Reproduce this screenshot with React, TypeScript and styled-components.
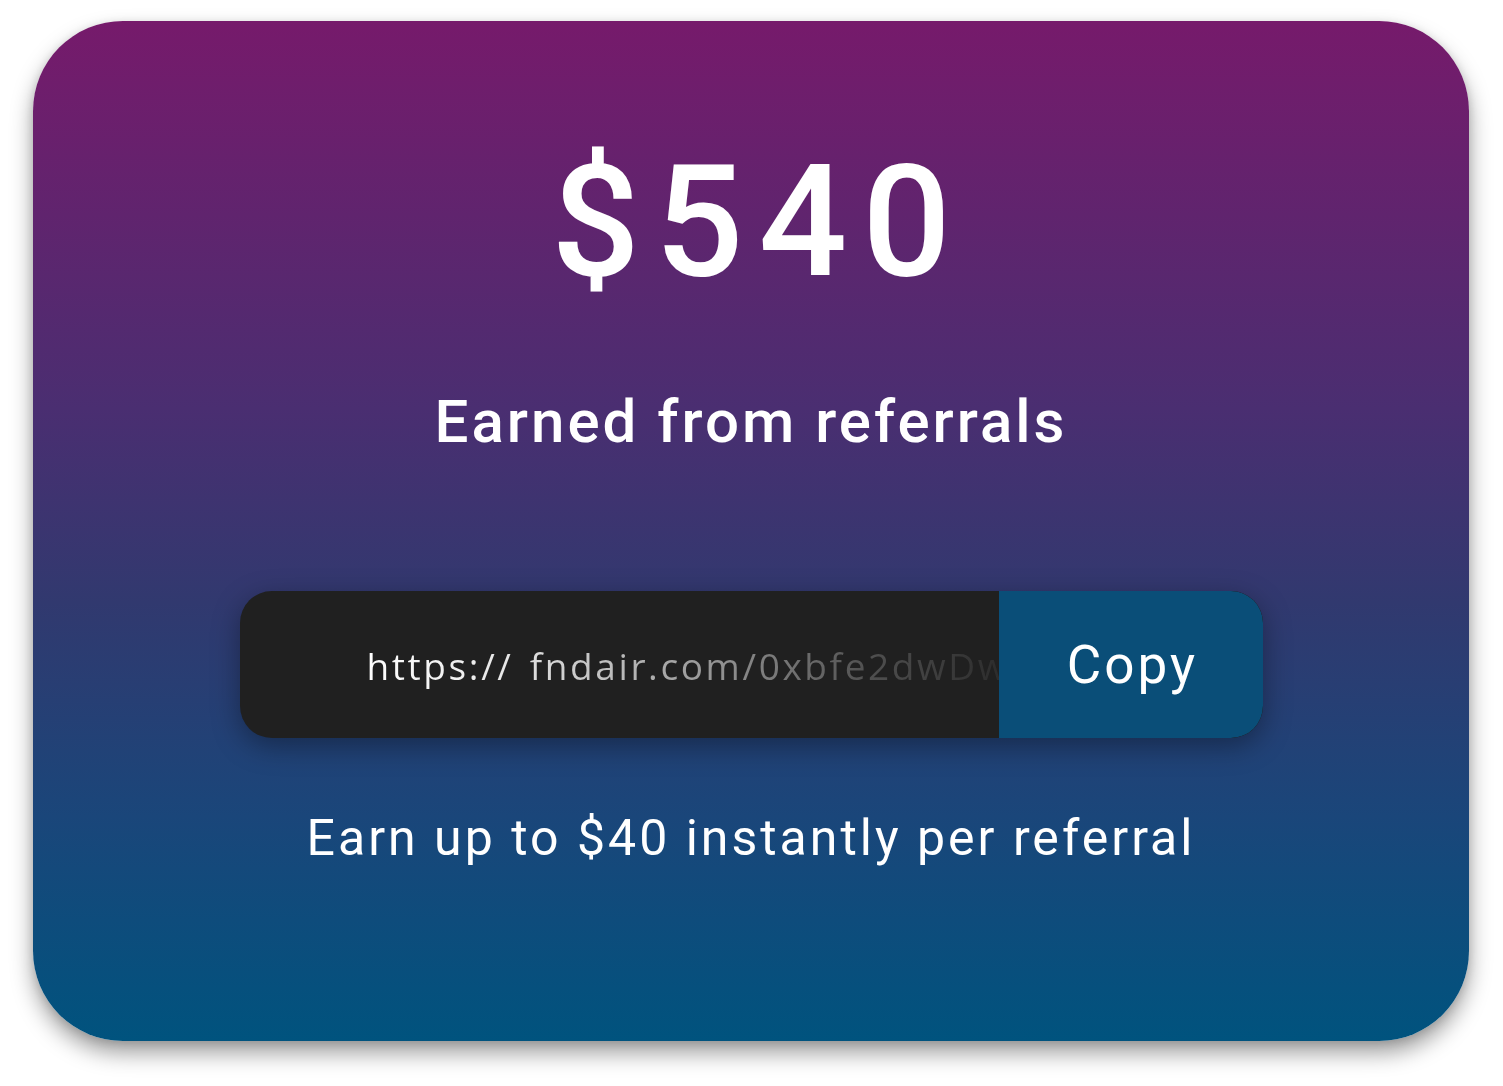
import React from "react";
import styled, { createGlobalStyle } from "styled-components";

const Global = createGlobalStyle`
  html, body { margin: 0; padding: 0; background: #ffffff; }
  body { font-family: Roboto, "Liberation Sans", sans-serif; }
  * { box-sizing: border-box; }
`;

const Page = styled.div`
  padding: 21px 34px 45px 33px;
`;

const Card = styled.section`
  height: 1020px;
  border-radius: 90px;
  background: linear-gradient(180deg, #761a6b 0%, #4a2e71 38%, #31396f 57%, #1a467a 78%, #00537e 100%);
  box-shadow: 0 12px 22px rgba(0, 0, 0, 0.38), 0 2px 8px rgba(0, 0, 0, 0.12);
  display: flex;
  flex-direction: column;
  align-items: center;
  padding-top: 121px;
  color: #ffffff;
`;

const Amount = styled.h1`
  margin: 0;
  font-family: Roboto, sans-serif;
  font-weight: 500;
  font-size: 156px;
  line-height: 160px;
  letter-spacing: 15px;
  padding-left: 15px;
`;

const Caption = styled.h2`
  margin: 90px 0 0;
  font-family: Roboto, sans-serif;
  font-weight: 500;
  font-size: 60px;
  line-height: 60px;
  letter-spacing: 3px;
`;

const LinkBar = styled.div`
  margin-top: 139px;
  width: 1023px;
  height: 147px;
  display: flex;
  border-radius: 32px;
  background: #202020;
  box-shadow: 0 8px 28px rgba(0, 0, 0, 0.35);
  overflow: hidden;
`;

const UrlField = styled.div`
  flex: 1;
  min-width: 0;
  display: flex;
  align-items: center;
  padding-left: 127px;
  overflow: hidden;
  white-space: nowrap;
`;

const UrlText = styled.span`
  font-family: "Open Sans", Lato, sans-serif;
  font-weight: 400;
  font-size: 37px;
  letter-spacing: 2.6px;
  word-spacing: 4px;
  padding-top: 2px;
  background: linear-gradient(90deg, #ffffff 0%, #e6e6e6 22%, #9a9a9a 52%, #505050 78%, #2a2a2a 100%);
  -webkit-background-clip: text;
  background-clip: text;
  color: transparent;
`;

const CopyButton = styled.button`
  width: 264px;
  flex: none;
  border: none;
  background: #0a4e78;
  color: #ffffff;
  font-family: Roboto, sans-serif;
  font-weight: 400;
  font-size: 53px;
  letter-spacing: 3px;
  padding: 0 0 0 4px;
  cursor: pointer;
  border-radius: 0 32px 32px 0;
`;

const Note = styled.p`
  margin: 75px 0 0;
  font-family: Roboto, sans-serif;
  font-weight: 400;
  font-size: 50px;
  line-height: 50px;
  letter-spacing: 3px;
`;

export default function App() {
  return (
    <Page>
      <Global />
      <Card>
        <Amount>$540</Amount>
        <Caption>Earned from referrals</Caption>
        <LinkBar>
          <UrlField>
            <UrlText>https:// fndair.com/0xbfe2dwDw</UrlText>
          </UrlField>
          <CopyButton>Copy</CopyButton>
        </LinkBar>
        <Note>Earn up to $40 instantly per referral</Note>
      </Card>
    </Page>
  );
}
